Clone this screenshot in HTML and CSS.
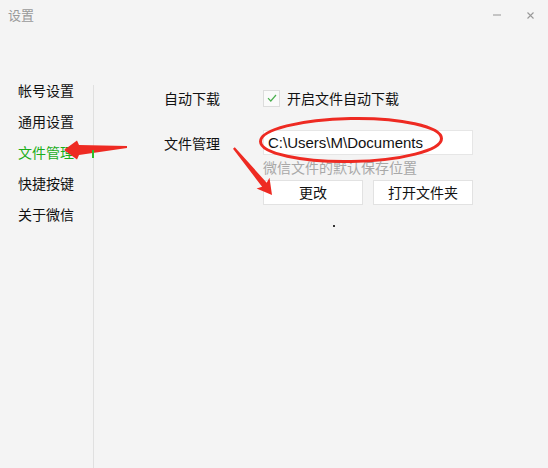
FILE: index.html
```html
<!DOCTYPE html>
<html lang="zh-CN">
<head>
    <meta charset="UTF-8">
    <meta name="viewport" content="width=device-width, initial-scale=1.0">
    <title>设置</title>
    <link rel="stylesheet" href="styles.css">
</head>
<body>
    <div class="window">
        <header class="titlebar">
            <span class="title">设置</span>
            <div class="controls">
                <span class="min"></span>
                <svg class="close" width="7" height="7" viewBox="0 0 7 7">
                    <path d="M0.5 0.5 L6.5 6.5 M6.5 0.5 L0.5 6.5" stroke="#999" stroke-width="1.1" fill="none"/>
                </svg>
            </div>
        </header>

        <div class="main">
            <nav class="nav">
                <div class="nav-item">帐号设置</div>
                <div class="nav-item">通用设置</div>
                <div class="nav-item active">文件管理</div>
                <div class="nav-item">快捷按键</div>
                <div class="nav-item">关于微信</div>
            </nav>
            <div class="divider"></div>

            <section class="content">
                <div class="row">
                    <div class="label">自动下载</div>
                    <label class="check">
                        <span class="box">
                            <svg width="14" height="14" viewBox="0 0 14 14">
                                <path d="M3 7.2 L5.8 10 L11 4" stroke="#4cb050" stroke-width="1.2" fill="none"/>
                            </svg>
                        </span>
                        开启文件自动下载
                    </label>
                </div>

                <div class="row">
                    <div class="label label-file">文件管理</div>
                    <div class="field">
                        <div class="path">C:\Users\M\Documents</div>
                        <div class="hint">微信文件的默认保存位置</div>
                        <div class="buttons">
                            <button class="btn">更改</button>
                            <button class="btn">打开文件夹</button>
                        </div>
                    </div>
                </div>

                <div class="dot"></div>
            </section>
        </div>

        <!-- red annotations drawn over the window -->
        <svg class="marks" width="548" height="468" viewBox="0 0 548 468">
            <ellipse cx="351" cy="140" rx="90.5" ry="21.5" fill="none" stroke="#ee2a22" stroke-width="3" transform="rotate(-1 351 140)"/>
            <polygon points="64,150 77,140.5 79,145 127,146 127,148 79,155 77,159.5" fill="#ee2a22"/>
            <polygon points="272,195 269.5,177.8 266.7,182.8 234.8,147.2 233,148.8 262.1,186.8 256.6,188.6" fill="#ee2a22"/>
        </svg>
    </div>
</body>
</html>
```

FILE: styles.css
```css
html, body {
    margin: 0;
    padding: 0;
}
body {
    background: #f4f4f4;
    font-family: "Noto Sans CJK SC", "Liberation Sans", sans-serif;
    color: #111;
}
.window {
    position: relative;
    height: 100vh;
    display: flex;
    flex-direction: column;
    overflow: hidden;
}
.titlebar {
    height: 30px;
    display: flex;
    align-items: center;
    justify-content: space-between;
    padding-left: 8px;
}
.title {
    font-size: 13px;
    color: #999;
    line-height: 30px;
}
.controls {
    display: flex;
    align-items: center;
    gap: 26px;
    padding-right: 14px;
}
.min {
    width: 8px;
    height: 2px;
    background: #c4c4c4;
}
.close {
    display: block;
}
.main {
    flex: 1;
    display: flex;
    padding-top: 45px;
}
.nav {
    width: 93px;
    box-sizing: border-box;
    padding-left: 18px;
}
.nav-item {
    position: relative;
    font-size: 14px;
    line-height: 31px;
    height: 31px;
    color: #111;
}
.nav-item.active {
    color: #1aad19;
}
.nav-item.active::after {
    content: "";
    position: absolute;
    right: -1px;
    top: 13px;
    width: 2px;
    height: 8px;
    background: #2bc02b;
    z-index: 1;
}
.divider {
    width: 1px;
    margin-top: 10px;
    background: #e0e0e0;
}
.content {
    flex: 1;
    padding: 11px 0 0 70px;
}
.row {
    display: flex;
    margin-bottom: 20px;
}
.label {
    width: 99px;
    font-size: 14px;
    line-height: 24px;
}
.label-file {
    line-height: 26px;
}
.check {
    display: flex;
    align-items: center;
    gap: 7px;
    font-size: 14px;
    line-height: 24px;
}
.box {
    width: 15px;
    height: 15px;
    border: 1px solid #dcdcdc;
    background: #fafafa;
    display: flex;
    align-items: center;
    justify-content: center;
}
.field {
    width: 210px;
}
.path {
    height: 23px;
    border: 1px solid #e6e6e6;
    background: #fff;
    padding: 0 4px;
    font-family: "Liberation Sans", sans-serif;
    font-size: 15px;
    line-height: 24px;
    color: #111;
}
.hint {
    margin-top: 2px;
    font-size: 14px;
    line-height: 20px;
    color: #a8a8a8;
}
.buttons {
    display: flex;
    gap: 10px;
    margin-top: 3px;
}
.btn {
    width: 100px;
    height: 25px;
    border: 1px solid #e2e2e2;
    background: #fff;
    font-family: "Noto Sans CJK SC", sans-serif;
    font-size: 14px;
    line-height: 23px;
    color: #111;
    padding: 0;
}
.dot {
    width: 2px;
    height: 2px;
    background: #333;
    margin: 12px 0 0 169px;
}
.marks {
    position: absolute;
    left: 0;
    top: 0;
    pointer-events: none;
}
```
